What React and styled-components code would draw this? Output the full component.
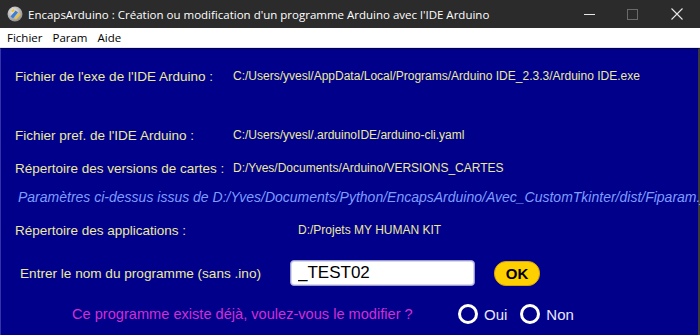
import styled, { createGlobalStyle } from 'styled-components';

const Global = createGlobalStyle`
  html, body {
    margin: 0;
    padding: 0;
    background: #00008b;
    overflow: hidden;
  }
`;

export default function App () {
  return (
    <Window>
      <Global />
      <TitleBar>
        <AppIcon />
        <Title>EncapsArduino : Création ou modification d'un programme Arduino avec l'IDE Arduino</Title>
        <Controls>
          <Ctl><svg width='11' height='11' viewBox='0 0 11 11'><path d='M0 5.5h11' stroke='#e6e6e6' strokeWidth='1' /></svg></Ctl>
          <Ctl><svg width='11' height='11' viewBox='0 0 11 11'><rect x='0.5' y='0.5' width='10' height='10' fill='none' stroke='#6a6a6a' /></svg></Ctl>
          <Ctl><svg width='12' height='12' viewBox='0 0 12 12'><path d='M0.5 0.5l11 11M11.5 0.5l-11 11' stroke='#e6e6e6' strokeWidth='1.1' /></svg></Ctl>
        </Controls>
      </TitleBar>
      <MenuBar>
        <MenuItem>Fichier</MenuItem>
        <MenuItem>Param</MenuItem>
        <MenuItem>Aide</MenuItem>
      </MenuBar>
      <Main>
        <Row gap={19}>
          <Label>Fichier de l'exe de l'IDE Arduino :</Label>
          <Value>C:/Users/yvesl/AppData/Local/Programs/Arduino IDE_2.3.3/Arduino IDE.exe</Value>
        </Row>
        <Row gap={43}>
          <Label>Fichier pref. de l'IDE Arduino :</Label>
          <Value>C:/Users/yvesl/.arduinoIDE/arduino-cli.yaml</Value>
        </Row>
        <Row gap={17}>
          <Label>Répertoire des versions de cartes :</Label>
          <Value>D:/Yves/Documents/Arduino/VERSIONS_CARTES</Value>
        </Row>
        <Note>Paramètres ci-dessus issus de D:/Yves/Documents/Python/EncapsArduino/Avec_CustomTkinter/dist/Fiparam.json</Note>
        <Row gap={17}>
          <Label width={283}>Répertoire des applications :</Label>
          <Value>D:/Projets MY HUMAN KIT</Value>
        </Row>
        <EntryRow>
          <EntryLabel>Entrer le nom du programme (sans .ino)</EntryLabel>
          <NameInput defaultValue='_TEST02' />
          <OkButton>OK</OkButton>
        </EntryRow>
        <QuestionRow>
          <Question>Ce programme existe déjà, voulez-vous le modifier ?</Question>
          <Radio><Circle />Oui</Radio>
          <Radio><Circle />Non</Radio>
        </QuestionRow>
      </Main>
    </Window>
  );
}

function AppIcon () {
  return (
    <svg width='16' height='16' viewBox='0 0 16 16'>
      <defs>
        <radialGradient id='ig' cx='0.4' cy='0.35' r='0.7'>
          <stop offset='0' stopColor='#f4f4f4' />
          <stop offset='1' stopColor='#8a8a8a' />
        </radialGradient>
      </defs>
      <circle cx='8' cy='8' r='7.5' fill='url(#ig)' />
      <path d='M3.5 10.5l5-6 2.5 2-5 6z' fill='#3f7fd0' />
      <path d='M7.5 12.5l4.5-5.5 1.5 1.5-4.5 5z' fill='#f2c230' />
      <path d='M4 5l2.5-2 1.5 1.2-2.5 2.2z' fill='#f2c230' />
    </svg>
  );
}

const Window = styled.div`
  width: 700px;
  height: 335px;
  display: flex;
  flex-direction: column;
  background: #00008b;
  overflow: hidden;
`;

const TitleBar = styled.div`
  height: 28px;
  flex: none;
  display: flex;
  align-items: center;
  padding-left: 7px;
  background: #2b2b2b;
  color: #ffffff;
  font-family: 'Open Sans', 'Noto Sans', sans-serif;
  font-size: 11.5px;
`;

const Title = styled.div`
  margin-left: 5px;
  white-space: nowrap;
  flex: 1;
`;

const Controls = styled.div`
  display: flex;
  align-items: center;
  height: 100%;
`;

const Ctl = styled.div`
  width: 43px;
  height: 100%;
  display: flex;
  align-items: center;
  justify-content: center;
  &:last-child { width: 46px; }
`;

const MenuBar = styled.div`
  height: 19px;
  flex: none;
  display: flex;
  align-items: center;
  padding-left: 2px;
  background: #ffffff;
  border-bottom: 1px solid #e4e4e4;
  font-family: 'Open Sans', 'Noto Sans', sans-serif;
  font-size: 11.5px;
  color: #000;
`;

const MenuItem = styled.span`
  padding: 0 5px;
`;

const Main = styled.div`
  flex: 1;
  display: flex;
  flex-direction: column;
  border-left: 1px solid #3434a8;
  border-right: 2px solid #3a3a3a;
  border-top: 1px solid #000050;
  font-family: 'Liberation Sans', Arial, sans-serif;
`;

const Row = styled.div`
  display: flex;
  align-items: center;
  height: 16px;
  margin-top: ${p => p.gap}px;
  padding-left: 14px;
  white-space: nowrap;
`;

const Label = styled.div`
  width: ${p => p.width || 218}px;
  flex: none;
  color: #ecea9c;
  font-size: 13.5px;
`;

const Value = styled.div`
  color: #ecea9c;
  font-size: 12px;
`;

const Note = styled.div`
  height: 16px;
  margin-top: 13px;
  padding-left: 17px;
  white-space: nowrap;
  font-style: italic;
  font-size: 14px;
  color: #7f9cff;
  line-height: 16px;
`;

const EntryRow = styled.div`
  display: flex;
  align-items: center;
  margin-top: 22px;
  padding-left: 19px;
`;

const EntryLabel = styled.div`
  width: 270px;
  color: #ecea9c;
  font-size: 13.6px;
  white-space: nowrap;
`;

const NameInput = styled.input`
  box-sizing: border-box;
  width: 185px;
  height: 26px;
  border: 1px solid #9a9ad0;
  border-radius: 4px;
  box-shadow: inset 0 0 0 1px #d8d8ec;
  padding: 0 7px;
  font-family: 'Liberation Sans', Arial, sans-serif;
  font-size: 17px;
  color: #000;
  background: #fff;
  outline: none;
`;

const OkButton = styled.button`
  margin-left: 19px;
  width: 46px;
  height: 25px;
  border: 1px solid #d9a400;
  border-radius: 12px;
  background: #ffd000;
  color: #000;
  font-family: 'Liberation Sans', Arial, sans-serif;
  font-weight: bold;
  font-size: 15px;
  padding: 0;
`;

const QuestionRow = styled.div`
  display: flex;
  align-items: center;
  height: 22px;
  margin-top: 17px;
  padding-left: 71px;
`;

const Question = styled.div`
  width: 386px;
  color: #d22ed2;
  font-size: 14.6px;
  white-space: nowrap;
`;

const Radio = styled.label`
  display: flex;
  align-items: center;
  margin-right: 13px;
  color: #e8e8ff;
  font-size: 15px;
`;

const Circle = styled.span`
  box-sizing: border-box;
  width: 20px;
  height: 20px;
  border: 3px solid #ffffff;
  border-radius: 50%;
  margin-right: 6px;
`;
